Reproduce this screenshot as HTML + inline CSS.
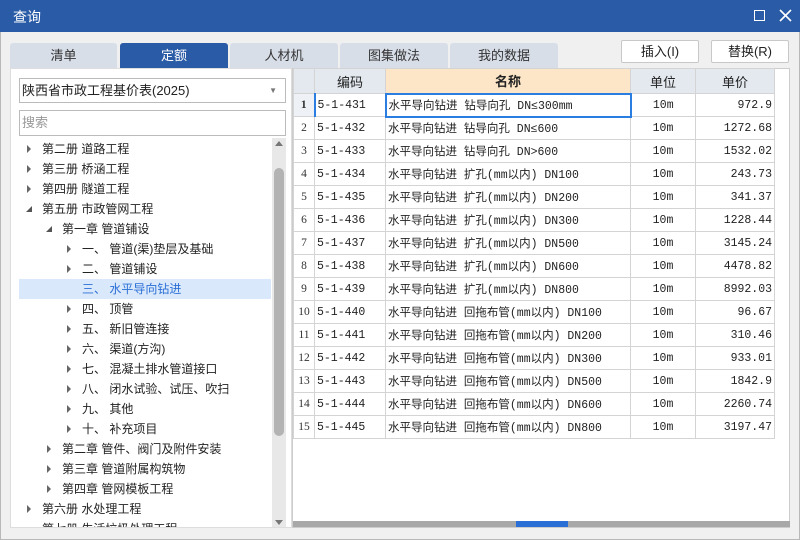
<!DOCTYPE html>
<html><head><meta charset="utf-8"><style>
*{margin:0;padding:0;box-sizing:border-box}
body{width:800px;height:540px;background:#f0f0f0;font-family:"Liberation Sans","Noto Sans CJK SC",sans-serif;font-size:12px;color:#222;position:relative;overflow:hidden}
.abs{position:absolute}
.title{left:0;top:0;width:800px;height:32px;background:#2a5ba6;color:#fff;font-size:14px;line-height:34px;padding-left:13px}
.tab{top:43px;height:25px;background:#d8dee8;line-height:25px;text-align:center;font-size:13px;color:#333;border-radius:3px 3px 0 0}
.tab.on{background:#2a5ba6;color:#fff}
.btn{top:40px;height:23px;width:78px;background:#fff;border:1px solid #c8c8c8;border-radius:2px;text-align:center;line-height:21px;font-size:13px}
.left{left:10px;top:68px;width:282px;height:460px;background:#fff;border:1px solid #ddd}
.row{position:absolute;height:20px;line-height:20px;font-size:12px;white-space:nowrap}
.ar{position:absolute;width:0;height:0;border-top:4px solid transparent;border-bottom:4px solid transparent;border-left:4px solid #666;top:6px}
.ad{position:absolute;width:0;height:0;border-left:6px solid transparent;border-bottom:6px solid #555;top:7px}
table{border-collapse:collapse;position:absolute;left:293px;top:68px;table-layout:fixed}
td{border:1px solid #d4d4d4;height:23px;font-size:12px;padding:0 2px;white-space:nowrap;overflow:hidden;font-family:"Liberation Mono","Noto Sans CJK SC",monospace;font-size:11.5px}
th{background:#e4e9f0;border:1px solid #d4d4d4;height:25px;font-weight:normal;font-size:13px}
td.n{text-align:center;background:#fff;font-family:"Liberation Serif",serif;color:#333}
td.c{text-align:center}td.r{text-align:right}
</style></head><body>
<div class="abs title">查询</div>
<div class="abs" style="left:754px;top:10px;width:11px;height:11px;border:1.5px solid #fff"></div>
<svg class="abs" style="left:779px;top:9px" width="13" height="13"><path d="M1 1L12 12M12 1L1 12" stroke="#fff" stroke-width="1.6"/></svg>
<div class="abs" style="left:0;top:32px;width:800px;height:508px;border:1px solid #b8b8b8;border-top:none"></div>
<div class="abs tab" style="left:10px;width:107px">清单</div>
<div class="abs tab on" style="left:120px;width:108px">定额</div>
<div class="abs tab" style="left:230px;width:108px">人材机</div>
<div class="abs tab" style="left:340px;width:108px">图集做法</div>
<div class="abs tab" style="left:450px;width:108px">我的数据</div>
<div class="abs btn" style="left:621px">插入(I)</div>
<div class="abs btn" style="left:711px">替换(R)</div>
<div class="abs left"></div>
<div class="abs" style="left:19px;top:78px;width:267px;height:25px;border:1px solid #bbb;background:#fff;line-height:23px;padding-left:2px;font-size:13px">陕西省市政工程基价表(2025)<span style="position:absolute;right:8px;top:0;font-size:8px;color:#777">▼</span></div>
<div class="abs" style="left:19px;top:110px;width:267px;height:26px;border:1px solid #bbb;background:#fff;line-height:24px;padding-left:2px;font-size:13px;color:#999">搜索</div>
<div class="abs" style="left:272px;top:138px;width:14px;height:389px;background:#e8e8e8"></div>
<div class="abs" style="left:274px;top:168px;width:10px;height:268px;background:#b3b3b3;border-radius:5px"></div>
<div class="abs" style="left:275px;top:141px;border-left:4px solid transparent;border-right:4px solid transparent;border-bottom:5px solid #777"></div>
<div class="abs" style="left:275px;top:520px;border-left:4px solid transparent;border-right:4px solid transparent;border-top:5px solid #777"></div>
<div class="abs" style="left:19px;top:279px;width:252px;height:20px;background:#d9e8fb"></div>
<div class="abs" style="left:0;top:139px">
<div class="row" style="top:0;left:42px"><i class="ar" style="left:-15px"></i>第二册 道路工程</div>
<div class="row" style="top:20px;left:42px"><i class="ar" style="left:-15px"></i>第三册 桥涵工程</div>
<div class="row" style="top:40px;left:42px"><i class="ar" style="left:-15px"></i>第四册 隧道工程</div>
<div class="row" style="top:60px;left:42px"><i class="ad" style="left:-16px"></i>第五册 市政管网工程</div>
<div class="row" style="top:80px;left:62px"><i class="ad" style="left:-16px"></i>第一章 管道铺设</div>
<div class="row" style="top:100px;left:82px"><i class="ar" style="left:-15px"></i>一、 管道(渠)垫层及基础</div>
<div class="row" style="top:120px;left:82px"><i class="ar" style="left:-15px"></i>二、 管道铺设</div>
<div class="row" style="top:140px;left:82px;color:#2a6fd6">三、 水平导向钻进</div>
<div class="row" style="top:160px;left:82px"><i class="ar" style="left:-15px"></i>四、 顶管</div>
<div class="row" style="top:180px;left:82px"><i class="ar" style="left:-15px"></i>五、 新旧管连接</div>
<div class="row" style="top:200px;left:82px"><i class="ar" style="left:-15px"></i>六、 渠道(方沟)</div>
<div class="row" style="top:220px;left:82px"><i class="ar" style="left:-15px"></i>七、 混凝土排水管道接口</div>
<div class="row" style="top:240px;left:82px"><i class="ar" style="left:-15px"></i>八、 闭水试验、试压、吹扫</div>
<div class="row" style="top:260px;left:82px"><i class="ar" style="left:-15px"></i>九、 其他</div>
<div class="row" style="top:280px;left:82px"><i class="ar" style="left:-15px"></i>十、 补充项目</div>
<div class="row" style="top:300px;left:62px"><i class="ar" style="left:-15px"></i>第二章 管件、阀门及附件安装</div>
<div class="row" style="top:320px;left:62px"><i class="ar" style="left:-15px"></i>第三章 管道附属构筑物</div>
<div class="row" style="top:340px;left:62px"><i class="ar" style="left:-15px"></i>第四章 管网模板工程</div>
<div class="row" style="top:360px;left:42px"><i class="ar" style="left:-15px"></i>第六册 水处理工程</div>
<div class="row" style="top:380px;left:42px;height:8px;overflow:hidden">第七册 生活垃圾处理工程</div>
</div>
<div class="abs" style="left:292px;top:68px;width:498px;height:460px;background:#fff;border:1px solid #ccc"></div>
<table>
<colgroup><col style="width:21px"><col style="width:71px"><col style="width:245px"><col style="width:65px"><col style="width:79px"></colgroup>
<tr><th></th><th>编码</th><th style="background:#fde6c8;font-weight:bold">名称</th><th>单位</th><th>单价</th></tr>
<tr><td class="n" style="font-weight:bold;background:#eef1f5">1</td><td style="border-left:2px solid #2a7de1">5-1-431</td><td style="border:2px solid #2a7de1">水平导向钻进 钻导向孔 DN≤300mm</td><td class="c">10m</td><td class="r">972.9</td></tr>
<tr><td class="n">2</td><td>5-1-432</td><td>水平导向钻进 钻导向孔 DN≤600</td><td class="c">10m</td><td class="r">1272.68</td></tr>
<tr><td class="n">3</td><td>5-1-433</td><td>水平导向钻进 钻导向孔 DN&gt;600</td><td class="c">10m</td><td class="r">1532.02</td></tr>
<tr><td class="n">4</td><td>5-1-434</td><td>水平导向钻进 扩孔(mm以内) DN100</td><td class="c">10m</td><td class="r">243.73</td></tr>
<tr><td class="n">5</td><td>5-1-435</td><td>水平导向钻进 扩孔(mm以内) DN200</td><td class="c">10m</td><td class="r">341.37</td></tr>
<tr><td class="n">6</td><td>5-1-436</td><td>水平导向钻进 扩孔(mm以内) DN300</td><td class="c">10m</td><td class="r">1228.44</td></tr>
<tr><td class="n">7</td><td>5-1-437</td><td>水平导向钻进 扩孔(mm以内) DN500</td><td class="c">10m</td><td class="r">3145.24</td></tr>
<tr><td class="n">8</td><td>5-1-438</td><td>水平导向钻进 扩孔(mm以内) DN600</td><td class="c">10m</td><td class="r">4478.82</td></tr>
<tr><td class="n">9</td><td>5-1-439</td><td>水平导向钻进 扩孔(mm以内) DN800</td><td class="c">10m</td><td class="r">8992.03</td></tr>
<tr><td class="n">10</td><td>5-1-440</td><td>水平导向钻进 回拖布管(mm以内) DN100</td><td class="c">10m</td><td class="r">96.67</td></tr>
<tr><td class="n">11</td><td>5-1-441</td><td>水平导向钻进 回拖布管(mm以内) DN200</td><td class="c">10m</td><td class="r">310.46</td></tr>
<tr><td class="n">12</td><td>5-1-442</td><td>水平导向钻进 回拖布管(mm以内) DN300</td><td class="c">10m</td><td class="r">933.01</td></tr>
<tr><td class="n">13</td><td>5-1-443</td><td>水平导向钻进 回拖布管(mm以内) DN500</td><td class="c">10m</td><td class="r">1842.9</td></tr>
<tr><td class="n">14</td><td>5-1-444</td><td>水平导向钻进 回拖布管(mm以内) DN600</td><td class="c">10m</td><td class="r">2260.74</td></tr>
<tr><td class="n">15</td><td>5-1-445</td><td>水平导向钻进 回拖布管(mm以内) DN800</td><td class="c">10m</td><td class="r">3197.47</td></tr>
</table>
<div class="abs" style="left:293px;top:521px;width:497px;height:6px;background:#a8a8a8"></div>
<div class="abs" style="left:516px;top:521px;width:52px;height:6px;background:#2a6fd6"></div>
</body></html>
